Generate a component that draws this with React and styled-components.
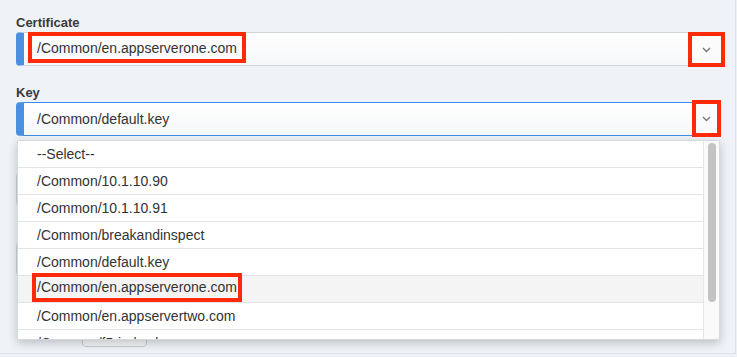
import React from 'react';
import styled, { createGlobalStyle } from 'styled-components';

const GlobalStyle = createGlobalStyle`
  body {
    margin: 0;
    background: #eef1f6;
    font-family: "Liberation Sans", Arial, sans-serif;
    color: #333;
  }
`;

const Panel = styled.div`
  box-sizing: border-box;
  width: 736px;
  height: 354px;
  padding: 15px 16px 0 16px;
  border-right: 1px solid #dde2ea;
  border-bottom: 1px solid #dde2ea;
  background: #eff2f7;
  overflow: hidden;
`;

const Field = styled.div`
  position: relative;
  margin-bottom: 19px;
`;

const Label = styled.div`
  height: 16px;
  font-size: 13px;
  font-weight: bold;
  line-height: 16px;
  color: #3a3a3a;
  margin-bottom: 1px;
`;

const Select = styled.div`
  box-sizing: border-box;
  display: flex;
  align-items: center;
  width: 704px;
  height: 34px;
  border: 1px solid ${({ $focused }) => ($focused ? '#3d8ee6' : '#cfd3da')};
  border-left: ${({ $plain }) => ($plain ? '1px solid #cfd3da' : '8px solid #4a8fe0')};
  border-radius: 4px;
  background: linear-gradient(#ffffff, #f6f7f9);
`;

const Value = styled.div`
  flex: 1;
  display: flex;
  align-items: center;
  align-self: stretch;
  padding-left: ${({ $marked }) => ($marked ? '4px' : '13px')};
  font-size: 14px;
`;

const Marked = styled.span`
  box-sizing: border-box;
  display: flex;
  align-items: center;
  height: ${({ $h }) => $h}px;
  padding: 0 ${({ $pad }) => $pad}px;
  border: 4px solid #ff2a0a;
  margin-bottom: ${({ $shift }) => $shift}px;
`;

const Arrow = styled.div`
  box-sizing: border-box;
  display: flex;
  align-items: center;
  justify-content: center;
  align-self: stretch;
  width: ${({ $w }) => $w}px;
  margin: ${({ $m }) => $m};
  border: 4px solid #ff2a0a;
  background: #fbfbfc;
`;

const Chevron = () => (
  <svg width="9" height="6" viewBox="0 0 9 6">
    <polyline points="1,1 4.5,4.5 8,1" fill="none" stroke="#777" strokeWidth="1.4" />
  </svg>
);

const Menu = styled.div`
  position: absolute;
  top: calc(100% + 4px);
  left: 1px;
  z-index: 2;
  box-sizing: border-box;
  width: 703px;
  height: 200px;
  display: flex;
  background: #fff;
  border: 1px solid #d6d9de;
  border-radius: 2px;
  box-shadow: 0 3px 10px rgba(0, 0, 0, 0.22);
  overflow: hidden;
`;

const List = styled.ul`
  flex: 1;
  list-style: none;
  margin: 0;
  padding: 0;
`;

const Item = styled.li`
  display: flex;
  align-items: center;
  height: 26px;
  padding-left: ${({ $marked }) => ($marked ? '14px' : '19px')};
  border-bottom: 1px solid #e2e4e7;
  background: ${({ $active }) => ($active ? '#f4f4f4' : '#fff')};
  font-size: 14px;
  white-space: nowrap;
`;

const Track = styled.div`
  width: 15px;
  background: #fafafa;
  border-left: 1px solid #e6e6e6;
  padding-top: 2px;
`;

const Thumb = styled.div`
  width: 8px;
  height: 159px;
  margin: 0 auto;
  border-radius: 4px;
  background: #c3c3c3;
`;

const ButtonRow = styled.div`
  display: flex;
  padding-left: 66px;
  margin-top: 41px;
`;

const Button = styled.div`
  width: 65px;
  height: 30px;
  box-sizing: border-box;
  border: 1px solid #c8ccd2;
  border-radius: 4px;
  background: #f6f7f9;
`;

const options = [
  '--Select--',
  '/Common/10.1.10.90',
  '/Common/10.1.10.91',
  '/Common/breakandinspect',
  '/Common/default.key',
  '/Common/en.appserverone.com',
  '/Common/en.appservertwo.com',
  '/Common/f5-irules.key',
];

export default function App() {
  return (
    <>
      <GlobalStyle />
      <Panel>
        <Field>
          <Label>Certificate</Label>
          <Select>
            <Value $marked>
              <Marked $h={31} $pad={5} $shift={3}>/Common/en.appserverone.com</Marked>
            </Value>
            <Arrow $w={37} $m="-1px -6px -2px 0">
              <Chevron />
            </Arrow>
          </Select>
        </Field>
        <Field>
          <Label>Key</Label>
          <Select $focused>
            <Value>/Common/default.key</Value>
            <Arrow $w={29} $m="-3px -2px -2px 0">
              <Chevron />
            </Arrow>
          </Select>
          <Menu>
            <List>
              {options.map((o) =>
                o === '/Common/en.appserverone.com' ? (
                  <Item key={o} $active $marked>
                    <Marked $h={29} $pad={1} $shift={4}>{o}</Marked>
                  </Item>
                ) : (
                  <Item key={o}>{o}</Item>
                )
              )}
            </List>
            <Track>
              <Thumb />
            </Track>
          </Menu>
        </Field>
        <Field>
          <Label />
          <Select $plain />
        </Field>
        <Field>
          <Label />
          <Select $plain />
        </Field>
        <ButtonRow>
          <Button />
        </ButtonRow>
      </Panel>
    </>
  );
}
